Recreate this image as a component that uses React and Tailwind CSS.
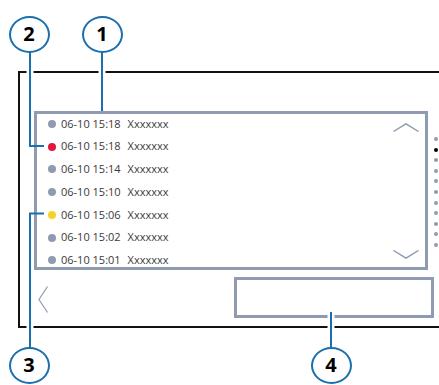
import React from 'react';

const BLUE = '#1a6fae';

const rows = [
  { time: '06-10 15:18', dot: 'bg-[#8e9bb0]' },
  { time: '06-10 15:18', dot: 'bg-[#e3173e]' },
  { time: '06-10 15:14', dot: 'bg-[#8e9bb0]' },
  { time: '06-10 15:10', dot: 'bg-[#8e9bb0]' },
  { time: '06-10 15:06', dot: 'bg-[#f4d22a]' },
  { time: '06-10 15:02', dot: 'bg-[#8e9bb0]' },
  { time: '06-10 15:01', dot: 'bg-[#8e9bb0]' },
];

const pages = [0, 1, 2, 3, 4, 5, 6, 7, 8, 9, 10];

const callouts = [
  { n: '2', x: 29, y: 34 },
  { n: '1', x: 102, y: 34 },
  { n: '3', x: 29, y: 365 },
  { n: '4', x: 331, y: 365 },
];

const Callout = ({ n, x, y }) => (
  <div
    className="absolute flex items-center justify-center w-[41px] h-[37px] rounded-[50%] border-2 border-[#1a6fae] bg-white text-[20px] font-bold text-black leading-none"
    style={{ left: x - 20.5, top: y - 18.5 }}
  >
    {n}
  </div>
);

export default function App() {
  return (
    <div
      className="relative w-[439px] h-[385px] overflow-hidden bg-white"
      style={{ fontFamily: "'Open Sans', 'Noto Sans', sans-serif" }}
    >
      {/* screen frame, open on the right */}
      <div className="ml-[18px] mt-[71px] w-[421px] h-[257px] border-2 border-r-0 border-[#111] pl-[14px] pt-[38px]">
        <div className="flex items-start">
          {/* history list */}
          <div className="flex w-[394px] h-[159px] border-[3px] border-[#8e9bb0]">
            <div className="flex-1 flex flex-col -mt-[1.5px]">
              {rows.map((r, i) => (
                <div key={i} className="shrink-0 flex items-center h-[22.75px] pl-[10.5px] text-[11px] text-[#3a3a3a]">
                  <span className={`w-[8px] h-[8px] rounded-full ${r.dot}`} />
                  <span className="ml-[5.5px]">{r.time}</span>
                  <span className="ml-[7px]">Xxxxxxx</span>
                </div>
              ))}
            </div>
            <div className="flex flex-col justify-between pt-[9px] pb-[8px] pr-[6px]">
              <svg width="26" height="9" viewBox="0 0 26 9">
                <polyline points="0.5,8.5 13,0.8 25.5,8.5" fill="none" stroke="#8e9bb0" strokeWidth="1.4" />
              </svg>
              <svg width="26" height="9" viewBox="0 0 26 9">
                <polyline points="0.5,0.5 13,8.2 25.5,0.5" fill="none" stroke="#8e9bb0" strokeWidth="1.4" />
              </svg>
            </div>
          </div>
          {/* page indicator */}
          <div className="flex flex-col gap-[6.6px] ml-[6px] mt-[26px]">
            {pages.map((p) => (
              <span key={p} className={`w-[4px] h-[4px] rounded-full ${p === 1 ? 'bg-black' : 'bg-[#8e9bb0]'}`} />
            ))}
          </div>
        </div>
        <div className="flex items-start mt-[7px]">
          <svg className="ml-[4px] mt-[9px]" width="10" height="27" viewBox="0 0 10 27">
            <polyline points="9.5,0.5 1,13.5 9.5,26.5" fill="none" stroke="#8e9bb0" strokeWidth="1.2" />
          </svg>
          <div className="ml-[186px] w-[200px] h-[41px] border-[3px] border-[#8e9bb0]" />
        </div>
      </div>

      {/* callout leaders */}
      <svg className="absolute left-0 top-0" width="439" height="385" viewBox="0 0 439 385">
        <g stroke="#fff" strokeWidth="7" fill="none">
          <line x1="30" y1="64" x2="30" y2="80" />
          <line x1="102" y1="64" x2="102" y2="80" />
          <line x1="30" y1="320" x2="30" y2="336" />
          <line x1="331" y1="312" x2="331" y2="336" />
        </g>
        <g stroke={BLUE} strokeWidth="2" fill="none">
          <polyline points="30,50 30,146 44,146" />
          <line x1="102" y1="50" x2="102" y2="111" />
          <polyline points="30,350 30,213.5 44,213.5" />
          <line x1="331" y1="350" x2="331" y2="312" />
        </g>
      </svg>

      {callouts.map((c) => (
        <Callout key={c.n} {...c} />
      ))}
    </div>
  );
}
